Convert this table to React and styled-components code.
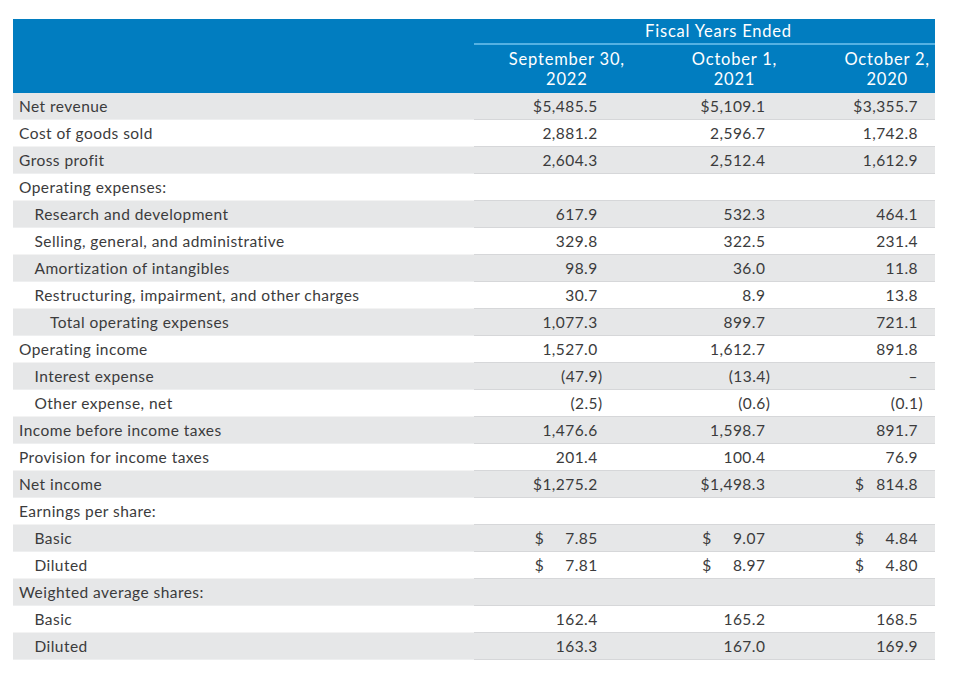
import React from "react";
import styled, {createGlobalStyle} from "styled-components";

const GlobalStyle = createGlobalStyle`
    body {
        margin: 0;
        background: #ffffff;
        font-family: Lato, "Open Sans", sans-serif;
        color: #3b3b3c;
    }
`

// per column: right padding of the numbers, and how far the header is pushed right
const COLS = [
    {pad: 30, shift: 16},
    {pad: 16, shift: 30},
    {pad: 17, shift: 29},
];

const ROWS = [
    {label: "Net revenue", values: ["$5,485.5", "$5,109.1", "$3,355.7"]},
    {label: "Cost of goods sold", values: ["2,881.2", "2,596.7", "1,742.8"]},
    {label: "Gross profit", values: ["2,604.3", "2,512.4", "1,612.9"]},
    {label: "Operating expenses:"},
    {label: "Research and development", indent: 1, values: ["617.9", "532.3", "464.1"]},
    {label: "Selling, general, and administrative", indent: 1, values: ["329.8", "322.5", "231.4"]},
    {label: "Amortization of intangibles", indent: 1, values: ["98.9", "36.0", "11.8"]},
    {label: "Restructuring, impairment, and other charges", indent: 1, values: ["30.7", "8.9", "13.8"]},
    {label: "Total operating expenses", indent: 2, values: ["1,077.3", "899.7", "721.1"]},
    {label: "Operating income", values: ["1,527.0", "1,612.7", "891.8"]},
    {label: "Interest expense", indent: 1, values: ["(47.9)", "(13.4)", "–"]},
    {label: "Other expense, net", indent: 1, values: ["(2.5)", "(0.6)", "(0.1)"]},
    {label: "Income before income taxes", values: ["1,476.6", "1,598.7", "891.7"]},
    {label: "Provision for income taxes", values: ["201.4", "100.4", "76.9"]},
    {label: "Net income", values: ["$1,275.2", "$1,498.3", {dollar: "814.8"}]},
    {label: "Earnings per share:"},
    {label: "Basic", indent: 1, values: [{dollar: "7.85"}, {dollar: "9.07"}, {dollar: "4.84"}]},
    {label: "Diluted", indent: 1, values: [{dollar: "7.81"}, {dollar: "8.97"}, {dollar: "4.80"}]},
    {label: "Weighted average shares:"},
    {label: "Basic", indent: 1, values: ["162.4", "165.2", "168.5"]},
    {label: "Diluted", indent: 1, values: ["163.3", "167.0", "169.9"]},
];

const Page = styled.div`
    padding: 19px 21px 16px 13px;
`

const Table = styled.div`
    width: 922px;
    display: grid;
    grid-template-columns: 461px repeat(3, 1fr);
    font-size: 15.5px;
    letter-spacing: 0.45px;
`

const HeaderBand = styled.div`
    grid-column: 1 / -1;
    display: grid;
    grid-template-columns: subgrid;
    grid-template-rows: 26px 48px;
    background: #017dc0;
    color: #ffffff;
    font-size: 16.5px;
    letter-spacing: 0.8px;
`

const GroupTitle = styled.div`
    grid-column: 2 / -1;
    grid-row: 1;
    display: flex;
    align-items: center;
    justify-content: center;
    padding-left: 28px;
    border-bottom: 2px solid #55b1e2;
`

const ColumnTitle = styled.div`
    grid-row: 2;
    grid-column: ${p => p.$col};
    display: flex;
    flex-direction: column;
    align-items: center;
    justify-content: center;
    padding-left: ${p => p.$shift * 2}px;
    white-space: nowrap;
`

const TitleLine = styled.span`
    display: block;
    height: 20px;
    line-height: 20px;
`

const Row = styled.div`
    grid-column: 1 / -1;
    display: grid;
    grid-template-columns: subgrid;
    height: 27px;
    background: ${p => p.$shaded ? "#e6e7e8" : "#ffffff"};
`

const Label = styled.div`
    display: flex;
    align-items: center;
    padding-left: ${p => 6 + p.$indent * 15.5}px;
    border-bottom: 1px solid ${p => p.$shaded ? "#eeeff0" : "#f3f3f3"};
`

const Value = styled.div`
    display: flex;
    align-items: center;
    justify-content: flex-end;
    padding-right: ${p => p.$pad}px;
    border-bottom: 1px solid #d6d7d9;
`

const Amount = styled.span`
    margin-right: ${p => p.$hang ? "-5px" : "0"};
`

const DollarBox = styled.span`
    width: 63px;
    display: flex;
    justify-content: space-between;
`

function Cell({value, col}) {
    let content = null;
    if (value && typeof value === "object") {
        content = <DollarBox><span>$</span><span>{value.dollar}</span></DollarBox>;
    } else if (value) {
        content = <Amount $hang={value.endsWith(")")}>{value}</Amount>;
    }
    return <Value $pad={col.pad}>{content}</Value>
}

const TITLES = [["September 30,", "2022"], ["October 1,", "2021"], ["October 2,", "2020"]];

export default function App() {
    return <Page>
        <GlobalStyle />
        <Table>
            <HeaderBand>
                <GroupTitle>Fiscal Years Ended</GroupTitle>
                {TITLES.map((t, j) => <ColumnTitle key={j} $col={j + 2} $shift={COLS[j].shift}>
                    <TitleLine>{t[0]}</TitleLine>
                    <TitleLine>{t[1]}</TitleLine>
                </ColumnTitle>)}
            </HeaderBand>
            {ROWS.map((row, i) => {
                const shaded = i % 2 === 0;
                return <Row key={i} $shaded={shaded}>
                    <Label $indent={row.indent || 0} $shaded={shaded}>{row.label}</Label>
                    {COLS.map((col, j) => <Cell key={j} col={col} value={row.values ? row.values[j] : null} />)}
                </Row>
            })}
        </Table>
    </Page>
}
